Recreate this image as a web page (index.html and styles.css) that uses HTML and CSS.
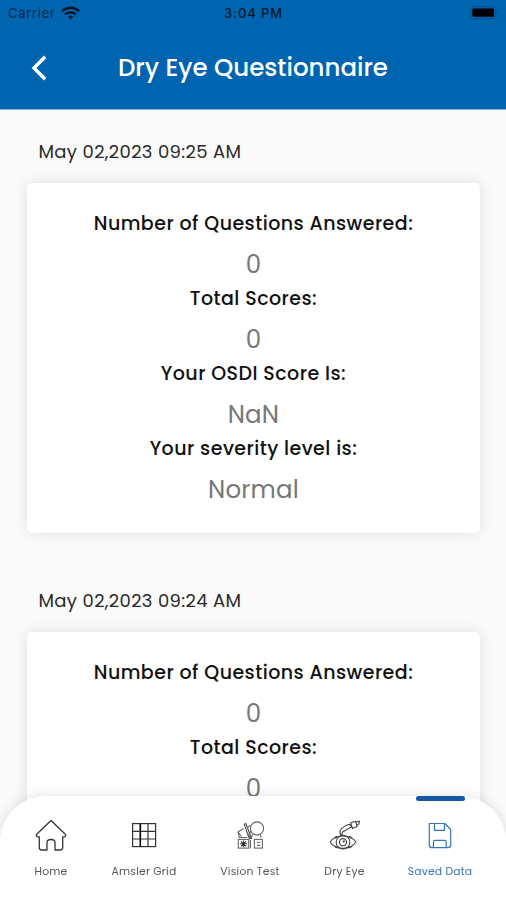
FILE: index.html
```html
<!DOCTYPE html>
<html lang="en">

<head>
    <meta charset="UTF-8">
    <meta name="viewport" content="width=device-width, initial-scale=1.0">
    <title>Dry Eye Questionnaire</title>
    <link rel="stylesheet" href="styles.css">
</head>

<body>
    <header class="header">
        <div class="status">
            <div class="status-left">
                <span class="carrier">Carrier</span>
                <svg class="wifi" width="19" height="14" viewBox="0 0 19 14" fill="none" stroke="#0a1420" stroke-width="2.3">
                    <path d="M1 5.2C6 .6 13 .6 18 5.2" />
                    <path d="M4 8.5C7.2 5.6 11.8 5.6 15 8.5" />
                    <path d="M9.5 13.2L6.9 10.6C8.4 9.2 10.6 9.2 12.1 10.6Z" fill="#0a1420" stroke="none" />
                </svg>
            </div>
            <span class="time">3:04 PM</span>
            <svg class="battery" width="29" height="14" viewBox="0 0 29 14">
                <rect x=".7" y=".7" width="25" height="12.2" rx="3.5" fill="none" stroke="#07508f" stroke-width="1.3" />
                <rect x="2.4" y="2.6" width="21.6" height="8.2" rx="1" fill="#000" />
                <path d="M27 4.5Q28.6 6.8 27 9Z" fill="#07457f" />
            </svg>
        </div>
        <div class="title-bar">
            <svg class="back" width="18" height="26" viewBox="0 0 18 26" fill="none" stroke="#fff" stroke-width="3.4">
                <path d="M14.2 1.8L3 13L14.2 24.2" />
            </svg>
            <h1>Dry Eye Questionnaire</h1>
        </div>
    </header>

    <main class="list">
        <section class="result">
            <p class="date">May 02,2023 09:25 AM</p>
            <dl class="card">
                <dt>Number of Questions Answered:</dt>
                <dd>0</dd>
                <dt>Total Scores:</dt>
                <dd>0</dd>
                <dt>Your OSDI Score Is:</dt>
                <dd>NaN</dd>
                <dt>Your severity level is:</dt>
                <dd>Normal</dd>
            </dl>
        </section>
        <section class="result">
            <p class="date">May 02,2023 09:24 AM</p>
            <dl class="card">
                <dt>Number of Questions Answered:</dt>
                <dd>0</dd>
                <dt>Total Scores:</dt>
                <dd>0</dd>
            </dl>
        </section>
    </main>

    <nav class="tabs">
        <a class="tab">
            <svg width="34" height="34" viewBox="0 0 34 34" fill="none" stroke="#333" stroke-width="1.3" stroke-linejoin="round">
                <path d="M17 2.5L31.3 16.3Q32.4 17.6 31 18.6L28.7 19V29.5Q28.7 32 26.2 32H21V24.5Q21 21.5 17 21.5T13 24.5V32H7.8Q5.3 32 5.3 29.5V19L3 18.6Q1.6 17.6 2.7 16.3Z" />
            </svg>
            <span>Home</span>
        </a>
        <a class="tab">
            <svg width="34" height="34" viewBox="0 0 34 34" fill="none" stroke="#333" stroke-width="1.2">
                <rect x="5.6" y="5.6" width="23" height="23" />
                <path d="M21 5.6V28.6M5.6 13.3H28.6M5.6 21H28.6" />
                <path d="M13.3 5.6V28.6" stroke="#000" stroke-width="1.6" />
            </svg>
            <span>Amsler Grid</span>
        </a>
        <a class="tab">
            <svg width="34" height="34" viewBox="0 0 34 34" fill="none" stroke="#666" stroke-width="1.1">
                <circle cx="24" cy="10.5" r="6.6" />
                <path d="M20 16L18 19.5M27 16.5L28.4 19.5M17.8 13L16.5 16" />
                <path d="M11.2 6.2L13 5.6L18.4 20.5H16.3Z" stroke="#444" />
                <path d="M10.5 10.5L5 14L6.3 19.5H14M5 14L8.5 18.5" />
                <path d="M14.5 9.5L17 7.5M14 15L17.8 20" />
                <rect x="5.3" y="21.4" width="10.4" height="8.7" />
                <path d="M10.5 22.5V29M7 25.7H14M8 23.3L13 28.3M13 23.3L8 28.3" stroke="#333" />
                <path d="M17.5 22V30.5" />
                <rect x="21.4" y="21.4" width="8" height="8.7" />
                <path d="M23.8 24.2H27.3M24 27.4H27" />
            </svg>
            <span>Vision Test</span>
        </a>
        <a class="tab">
            <svg width="34" height="34" viewBox="0 0 34 34" fill="none" stroke="#444" stroke-width="1.1">
                <path d="M2 24C7.4 16 22.4 16 28 24C22.4 32.5 7.4 32.5 2 24Z" />
                <circle cx="15" cy="24.2" r="6.8" />
                <circle cx="15" cy="24.2" r="3.6" />
                <path d="M15 24.2L16.6 22.7" stroke-width="1.8" />
                <path d="M7 19.9L9.4 18.5M20.8 18.5L23.4 19.9M7 28.5L9.4 29.8M20.8 29.8L23.4 28.5" stroke-width="1.8" />
                <path d="M13.6 17.6C10.4 14.8 12 11 16 8.6Q19 6.6 22.1 6.4L23.7 9.2Q21.5 9.4 19 11.6C16 13 13.1 13.5 14.2 17.4" />
                <path d="M22.7 4.8L24.5 10.4L29 8.4L27.8 3.4L24.3 4.2Z" />
                <path d="M28 4L31.4 3.2L31 6L29 7.2" />
            </svg>
            <span>Dry Eye</span>
        </a>
        <a class="tab active">
            <svg width="34" height="34" viewBox="0 0 34 34" fill="none" stroke="#3974b8" stroke-width="1.2" stroke-linejoin="round">
                <path d="M6.3 5.5H21.8L27.7 11.5V27Q27.7 29.7 25 29.7H9Q6.3 29.7 6.3 27Z" />
                <path d="M11.5 5.5V12.3H21.4V5.5" />
                <path d="M10.4 29.7V24Q10.4 22.3 12 22.3H21.6Q23.2 22.3 23.2 24V29.7" />
            </svg>
            <span>Saved Data</span>
        </a>
    </nav>
</body>

</html>
```
FILE: styles.css
```css
* {
    margin: 0;
    padding: 0;
    box-sizing: border-box;
}

body {
    height: 900px;
    display: flex;
    flex-direction: column;
    overflow: hidden;
    background: #fafafa;
    font-family: Poppins, Inter, "Liberation Sans", sans-serif;
}

/* header */
.header {
    flex: none;
    height: 110px;
    background: #0065b0;
    border-bottom: 1px solid #86afd8;
}

.status {
    height: 26px;
    display: grid;
    grid-template-columns: 1fr auto 1fr;
    align-items: center;
    padding: 0 7px 0 8px;
    font-family: Inter, "Liberation Sans", sans-serif;
    font-size: 13px;
    color: #0a2744;
}

.status-left {
    display: flex;
    align-items: center;
    gap: 5px;
}

.carrier {
    letter-spacing: .7px;
}

.time {
    color: #06182a;
    font-weight: 500;
    letter-spacing: .9px;
}

.battery {
    justify-self: end;
}

.title-bar {
    height: 84px;
    display: grid;
    grid-template-columns: 60px 1fr 60px;
    align-items: center;
}

.back {
    margin-left: 31px;
}

.title-bar h1 {
    font-size: 24.5px;
    font-weight: 500;
    line-height: 36px;
    text-align: center;
    white-space: nowrap;
    color: #fff;
}

/* results */
.list {
    flex: 1;
    min-height: 0;
    overflow: hidden;
    padding: 27px 26px 0 27px;
}

.result {
    margin-bottom: 53px;
}

.date {
    height: 46px;
    padding-left: 11.5px;
    font-size: 18px;
    line-height: 30px;
    letter-spacing: .35px;
    color: #2a2a2a;
}

.card {
    height: 350px;
    padding-top: 23px;
    border-radius: 5px;
    background: #fff;
    box-shadow: 0 0 15px rgba(0, 0, 0, .11);
    text-align: center;
}

.card dt {
    height: 34px;
    font-size: 19px;
    font-weight: 500;
    line-height: 36px;
    letter-spacing: .45px;
    color: #111;
}

.card dd {
    height: 41px;
    font-size: 24.5px;
    line-height: 50px;
    letter-spacing: .2px;
    color: #777;
}

/* bottom tabs */
.tabs {
    position: fixed;
    left: 0;
    right: 0;
    bottom: 0;
    height: 104px;
    display: grid;
    grid-template-columns: 93px 93px 119px 70px 121px;
    padding: 22px 0 0 4.5px;
    border-radius: 46px 46px 0 0;
    background: #fff;
    box-shadow: 0 0 14px rgba(0, 0, 0, .12);
}

.tab {
    position: relative;
    display: flex;
    flex-direction: column;
    align-items: center;
    gap: 12px;
    font-size: 10.8px;
    line-height: 16px;
    letter-spacing: .2px;
    white-space: nowrap;
    color: #555;
}

.tab.active {
    color: #3974b8;
}

.tab.active::before {
    content: "";
    position: absolute;
    top: -22px;
    width: 49px;
    height: 5px;
    border-radius: 3px;
    background: #1558a8;
}
```
